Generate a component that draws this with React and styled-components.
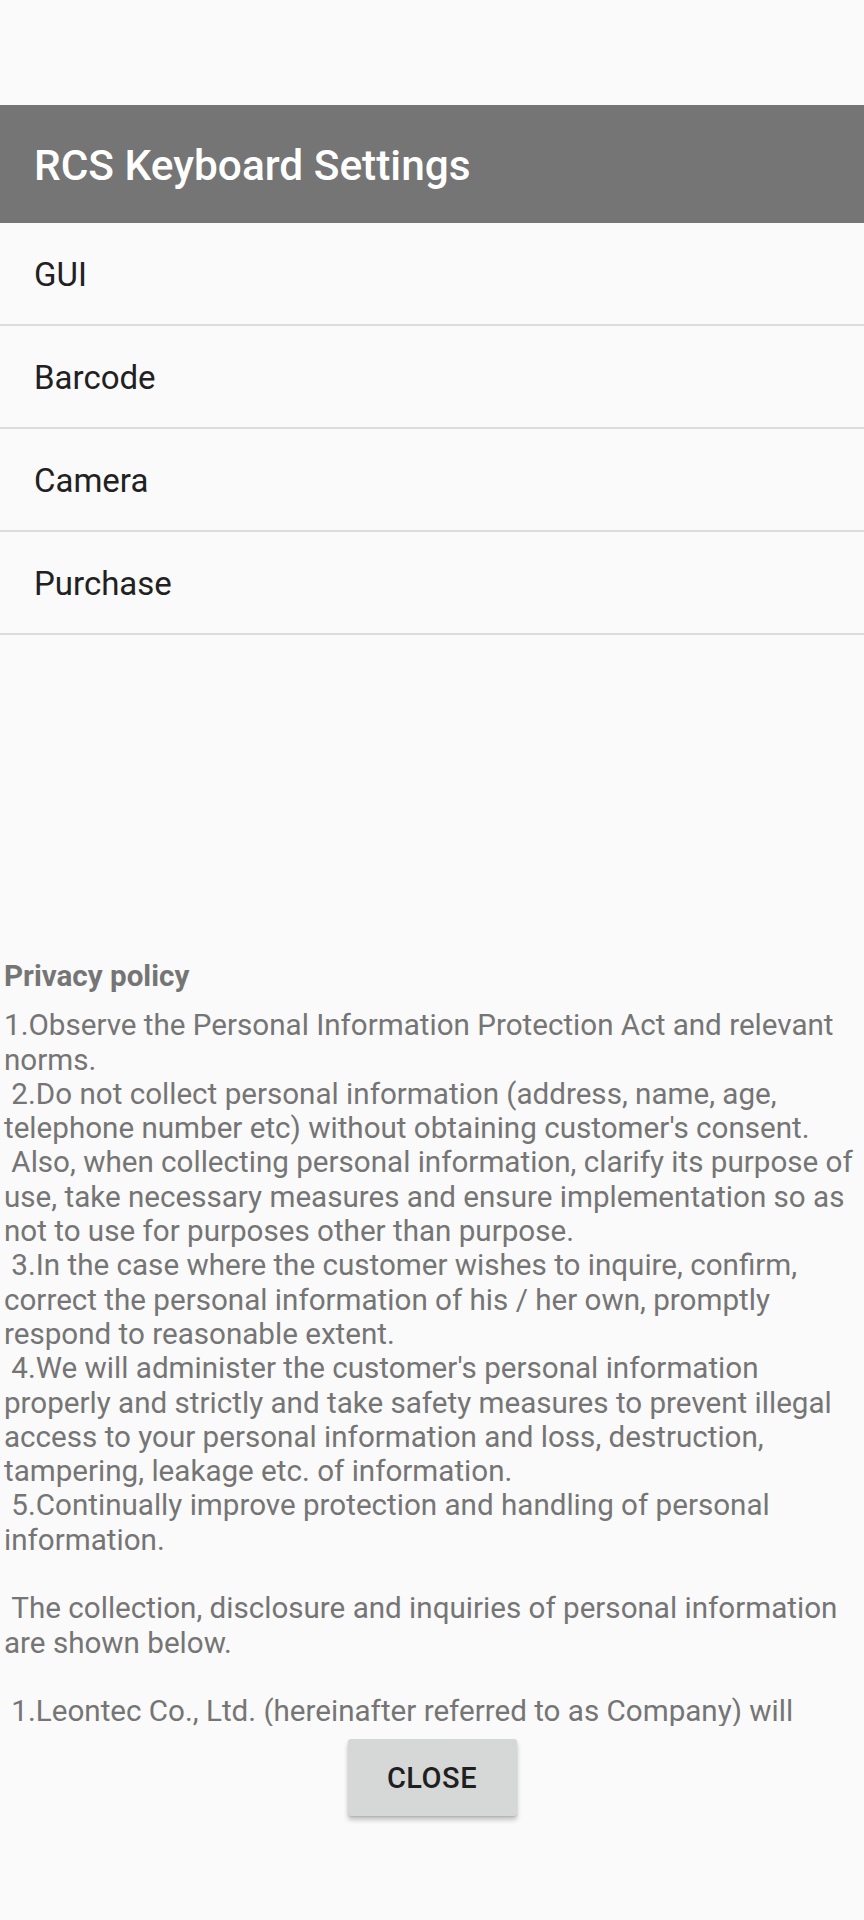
import React from "react";
import styled, { createGlobalStyle } from "styled-components";

const Global = createGlobalStyle`
  html, body {
    margin: 0;
    padding: 0;
    background: #fafafa;
  }
  body {
    font-family: Roboto, "Noto Sans", "Liberation Sans", sans-serif;
  }
`;

const Screen = styled.div`
  width: 864px;
  height: 1920px;
  display: flex;
  flex-direction: column;
  background: #fafafa;
  overflow: hidden;
`;

const StatusSpace = styled.div`
  height: 105px;
  flex: none;
`;

const AppBar = styled.header`
  height: 118px;
  flex: none;
  display: flex;
  align-items: center;
  padding-left: 34px;
  padding-top: 2px;
  background: #757575;
  box-sizing: border-box;
`;

const Title = styled.h1`
  margin: 0;
  font-size: 42.4px;
  font-weight: 500;
  color: #ffffff;
  letter-spacing: 0;
`;

const List = styled.ul`
  list-style: none;
  margin: 0;
  padding: 0;
  flex: none;
`;

const Row = styled.li`
  display: flex;
  align-items: center;
  padding-left: 34px;
  padding-top: 2px;
  box-sizing: border-box;
  height: 103px;
  border-bottom: 2.5px solid #dcdcdc;
  font-size: 33px;
  color: #212121;
`;

const PolicyPanel = styled.section`
  margin-top: 324px;
  height: 767px;
  flex: none;
  overflow: hidden;
  padding: 0 4px 0 4px;
  color: #757575;
`;

const PolicyTitle = styled.h2`
  margin: 0 0 15px;
  font-size: 29.6px;
  line-height: 34.3px;
  font-weight: 700;
`;

const PolicyBody = styled.p`
  margin: 0;
  font-size: 29.6px;
  line-height: 34.3px;
  white-space: pre-wrap;
`;

const ButtonBar = styled.div`
  display: flex;
  justify-content: center;
  padding-top: 13px;
`;

const CloseButton = styled.button`
  width: 169px;
  height: 77px;
  border: none;
  border-radius: 3px;
  background: #d6d7d7;
  color: #1f1f1f;
  font-family: Roboto, sans-serif;
  font-size: 29px;
  font-weight: 500;
  letter-spacing: 0.5px;
  box-shadow: 0 4px 5px rgba(0, 0, 0, 0.22), 0 1px 2px rgba(0, 0, 0, 0.12);
  cursor: pointer;
`;

const items = ["GUI", "Barcode", "Camera", "Purchase"];

const policy = `1.Observe the Personal Information Protection Act and relevant norms.
 2.Do not collect personal information (address, name, age, telephone number etc) without obtaining customer's consent.
 Also, when collecting personal information, clarify its purpose of use, take necessary measures and ensure implementation so as not to use for purposes other than purpose.
 3.In the case where the customer wishes to inquire, confirm, correct the personal information of his / her own, promptly respond to reasonable extent.
 4.We will administer the customer's personal information properly and strictly and take safety measures to prevent illegal access to your personal information and loss, destruction, tampering, leakage etc. of information.
 5.Continually improve protection and handling of personal information.

 The collection, disclosure and inquiries of personal information are shown below.

 1.Leontec Co., Ltd. (hereinafter referred to as Company) will collect the personal information necessary for the provision of services only within the scope of the purpose of use.`;

export default function App() {
  return (
    <>
      <Global />
      <Screen>
        <StatusSpace />
        <AppBar>
          <Title>RCS Keyboard Settings</Title>
        </AppBar>
        <List>
          {items.map((it) => (
            <Row key={it}>{it}</Row>
          ))}
        </List>
        <PolicyPanel>
          <PolicyTitle>Privacy policy</PolicyTitle>
          <PolicyBody>{policy}</PolicyBody>
        </PolicyPanel>
        <ButtonBar>
          <CloseButton>CLOSE</CloseButton>
        </ButtonBar>
      </Screen>
    </>
  );
}
